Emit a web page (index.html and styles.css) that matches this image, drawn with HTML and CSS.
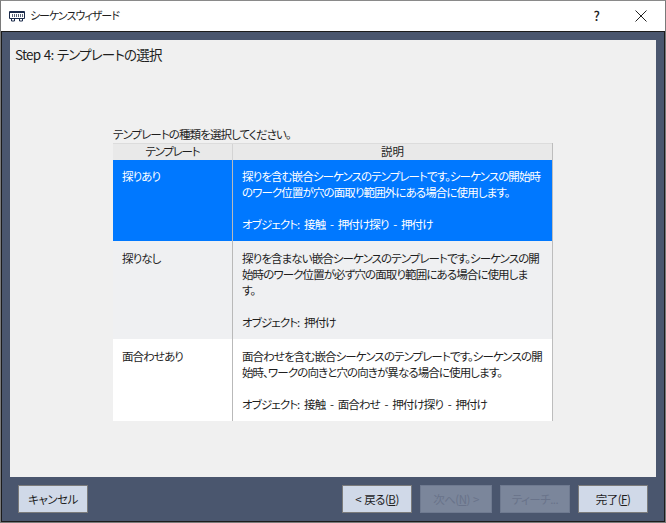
FILE: index.html
```html
<!DOCTYPE html>
<html lang="ja">
<head>
  <meta charset="UTF-8">
  <title>シーケンスウィザード</title>
  <link rel="stylesheet" href="styles.css">
</head>
<body>
  <div class="window">
    <div class="titlebar">
      <svg class="app-icon" width="16" height="11" viewBox="0 0 16 11" fill="none" stroke="#1a2a4a" stroke-width="1">
        <path d="M0.5 0.5h15v7h-15z"/>
        <path d="M1 1.5h14" />
        <path d="M3.5 3v3M5.5 3v3M7.5 3v3M9.5 3v3M11.5 3v3M13.5 3v3" stroke="#5a6478"/>
        <path d="M2.5 8v2h3V8M10.5 8v2h3V8"/>
      </svg>
      <span class="title">シーケンスウィザード</span>
      <span class="help">?</span>
      <svg class="close" width="12" height="12" viewBox="0 0 12 12" stroke="#222" stroke-width="1">
        <path d="M0.5 0.5l11 11M11.5 0.5l-11 11"/>
      </svg>
    </div>
    <div class="body">
      <div class="panel">
        <h1 class="step">Step 4: テンプレートの選択</h1>
        <div class="picker">
          <p class="caption">テンプレートの種類を選択してください。</p>
          <div class="table">
            <div class="row head">
              <div class="cell-name">テンプレート</div>
              <div class="cell-desc">説明</div>
            </div>
            <div class="row row-1 selected">
              <div class="cell-name">探りあり</div>
              <div class="cell-desc">
                <p>探りを含む嵌合シーケンスのテンプレートです。シーケンスの開始時<br>のワーク位置が穴の面取り範囲外にある場合に使用します。</p>
                <p>オブジェクト: 接触 - 押付け探り - 押付け</p>
              </div>
            </div>
            <div class="row row-2 alt">
              <div class="cell-name">探りなし</div>
              <div class="cell-desc">
                <p>探りを含まない嵌合シーケンスのテンプレートです。シーケンスの開<br>始時のワーク位置が必ず穴の面取り範囲にある場合に使用しま<br>す。</p>
                <p>オブジェクト: 押付け</p>
              </div>
            </div>
            <div class="row row-3">
              <div class="cell-name">面合わせあり</div>
              <div class="cell-desc">
                <p>面合わせを含む嵌合シーケンスのテンプレートです。シーケンスの開<br>始時、ワークの向きと穴の向きが異なる場合に使用します。</p>
                <p>オブジェクト: 接触 - 面合わせ - 押付け探り - 押付け</p>
              </div>
            </div>
          </div>
        </div>
      </div>
      <div class="footer">
        <button class="btn">キャンセル</button>
        <div class="spacer"></div>
        <button class="btn">&lt; 戻る(<u>B</u>)</button>
        <button class="btn btn-next" disabled>次へ(<u>N</u>) &gt;</button>
        <button class="btn" disabled>ティーチ...</button>
        <button class="btn">完了(<u>F</u>)</button>
      </div>
    </div>
  </div>
</body>
</html>
```
FILE: styles.css
```css
* {
  box-sizing: border-box;
}

body {
  margin: 0;
  width: 666px;
  height: 523px;
  overflow: hidden;
  font-family: "Noto Sans CJK JP", "Noto Sans", sans-serif;
  font-size: 11.5px;
  font-feature-settings: "palt";
  letter-spacing: -0.9px;
  word-spacing: 3px;
  color: #1e1e1e;
}

.window {
  display: flex;
  flex-direction: column;
  height: 523px;
  border: 1px solid #7a7a7a;
  border-top-color: #8a8a8a;
  background: #fff;
}

.titlebar {
  display: flex;
  align-items: center;
  height: 30px;
  flex-shrink: 0;
  padding: 0 18px 2px 8px;
  background: #fff;
}

.app-icon {
  margin: 3px 5px 0 0;
}

.title {
  flex: 1;
  font-size: 11px;
  letter-spacing: -1px;
}

.help {
  margin-right: 36px;
  font-size: 13px;
  font-weight: 500;
}

.close {
  margin-top: 2px;
}

.body {
  flex: 1;
  display: flex;
  flex-direction: column;
  padding: 8px 8px 0 8px;
  background: #4a566e;
  border: 1px solid #1c1c1c;
}

.panel {
  height: 437px;
  padding: 0 0 0 5px;
  background: #f0f0f0;
  display: flex;
  flex-direction: column;
}

.step {
  margin: 5px 0 0;
  font-size: 13.5px;
  font-weight: 400;
  line-height: 19px;
  letter-spacing: -0.75px;
  word-spacing: 1px;
}

.picker {
  width: 440px;
  margin: 61px 0 0 98px;
}

.caption {
  margin: 0;
  height: 18px;
  line-height: 18px;
}

.table {
  border-right: 1px solid #bdbdbd;
}

.row {
  display: grid;
  grid-template-columns: 120px 1fr;
  overflow: hidden;
}

.cell-name {
  padding: 9px 9px 0;
  border-right: 1px solid #b9b9b9;
}

.cell-desc {
  padding: 9px 9px 0;
  line-height: 16px;
}

.cell-desc p {
  margin: 0 0 16px;
  white-space: nowrap;
}

.head {
  height: 17px;
  background: #e9e9e9;
  border-top: 1px solid #dcdcdc;
  text-align: center;
}

.head .cell-name,
.head .cell-desc {
  padding: 0;
  line-height: 14px;
}

.head .cell-name {
  border-right-color: #d4d4d4;
  letter-spacing: -1.2px;
}

.head .cell-desc {
  letter-spacing: 0;
}

.row-1 {
  height: 81px;
}

.row-1 .cell-name,
.row-1 .cell-desc {
  padding-top: 8px;
}

.row-2 {
  height: 98px;
}

.row-3 {
  height: 82px;
  background: #fff;
}

.selected {
  background: #0078ff;
  color: #fff;
}

.alt {
  background: #eff0f2;
}

.footer {
  display: flex;
  gap: 8px;
  padding: 8px 8px 0;
}

.spacer {
  flex: 1;
}

.btn {
  width: 70px;
  height: 28px;
  padding: 0;
  font: inherit;
  font-feature-settings: inherit;
  letter-spacing: -0.5px;
  word-spacing: 1px;
  color: #1e1e1e;
  background: #d0d9e8;
  border: 1px solid #7b7b7b;
}

.btn-next {
  width: 72px;
}

.btn:disabled {
  color: #69738a;
  background: #7b869b;
  border-color: #6f7a90;
}
```
